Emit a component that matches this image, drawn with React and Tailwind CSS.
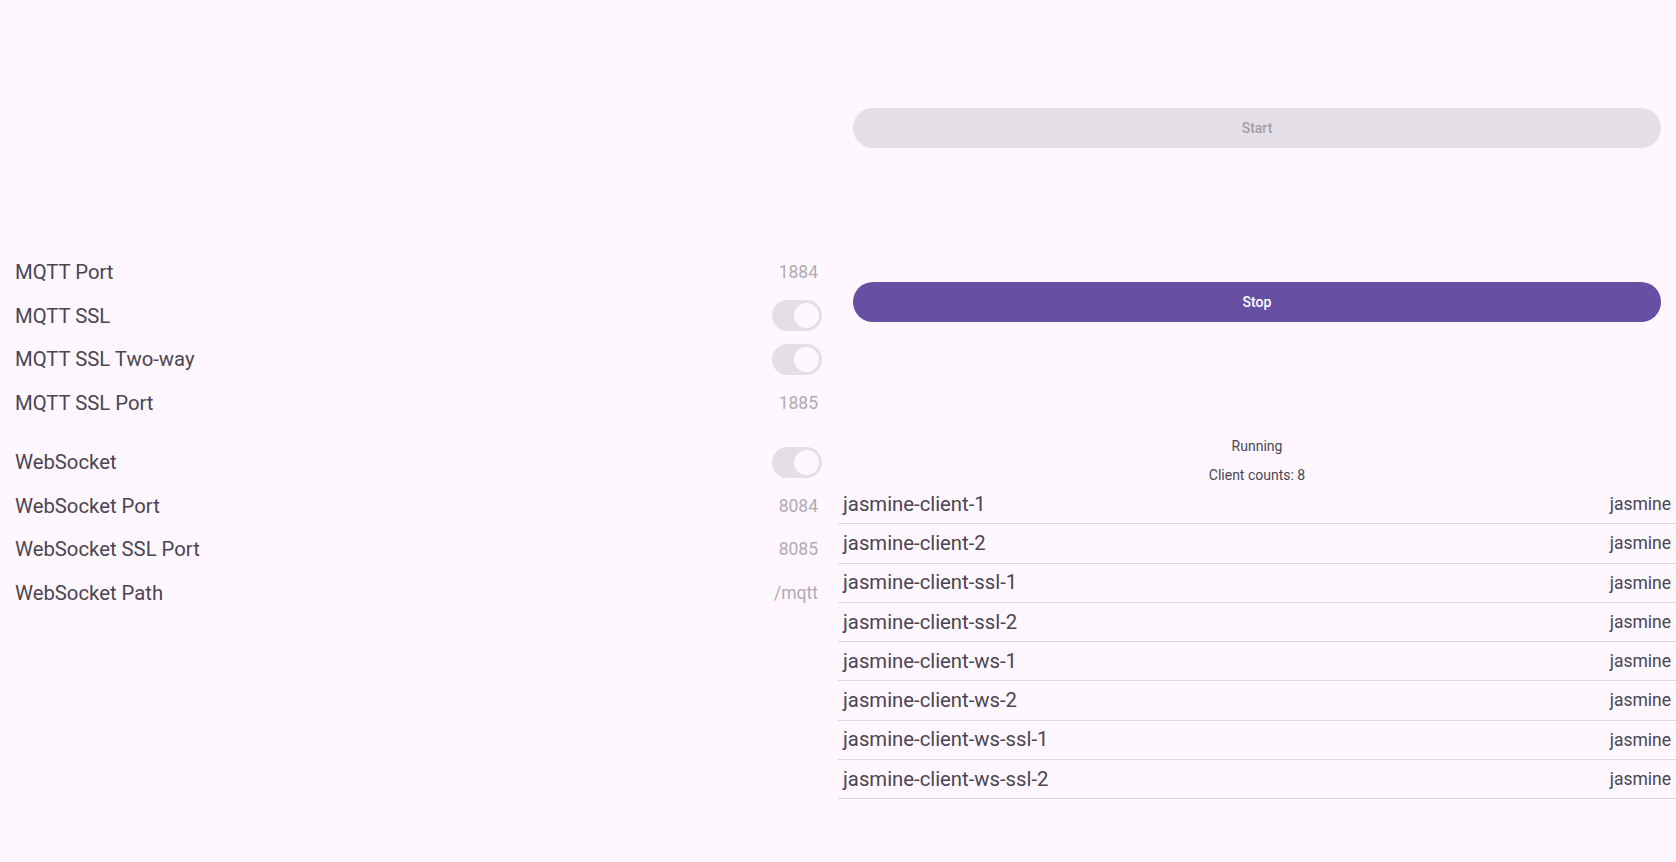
import React from 'react';

const settings = [
  { label: 'MQTT Port', value: '1884' },
  { label: 'MQTT SSL', toggle: true },
  { label: 'MQTT SSL Two-way', toggle: true },
  { label: 'MQTT SSL Port', value: '1885' },
];

const wsSettings = [
  { label: 'WebSocket', toggle: true },
  { label: 'WebSocket Port', value: '8084' },
  { label: 'WebSocket SSL Port', value: '8085' },
  { label: 'WebSocket Path', value: '/mqtt' },
];

const clients = [
  'jasmine-client-1',
  'jasmine-client-2',
  'jasmine-client-ssl-1',
  'jasmine-client-ssl-2',
  'jasmine-client-ws-1',
  'jasmine-client-ws-2',
  'jasmine-client-ws-ssl-1',
  'jasmine-client-ws-ssl-2',
];

const Toggle = () => (
  <div className="w-[50px] h-[31px] rounded-full bg-[#e4dfe6] flex items-center justify-end px-[3px]">
    <div className="w-[25px] h-[25px] rounded-full bg-[#fef7ff]" />
  </div>
);

const SettingRow = ({ item }) => (
  <div className="h-[43.5px] flex items-center justify-between">
    <span className="text-[20.3px] text-[#4a4550]">{item.label}</span>
    {item.toggle ? (
      <Toggle />
    ) : (
      <span className="text-[17.5px] text-[#b0abb4] mr-[4px]">{item.value}</span>
    )}
  </div>
);

const App = () => {
  return (
    <div className="w-full h-[862px] bg-[#fef7ff] flex font-['Roboto',sans-serif]">
      {/* settings */}
      <div className="w-[838px] flex flex-col justify-center pl-[15px] pr-[16px] pt-[3px]">
        {settings.map((item) => (
          <SettingRow key={item.label} item={item} />
        ))}
        <div className="mt-[16px]">
          {wsSettings.map((item) => (
            <SettingRow key={item.label} item={item} />
          ))}
        </div>
      </div>

      {/* server control + clients */}
      <div className="flex-1 flex flex-col pt-[108px]">
        <div className="mx-[15px]">
          <button className="w-full h-[40px] rounded-full bg-[#e4dfe6] text-[14px] font-medium text-[#a39ea7]">
            Start
          </button>
          <button className="w-full h-[40px] mt-[134px] rounded-full bg-[#6750a4] text-[14px] font-medium text-white">
            Stop
          </button>
        </div>
        <p className="mt-[114px] h-[20px] leading-[20px] text-center text-[14px] text-[#4a4550]">Running</p>
        <p className="mt-[9px] h-[20px] leading-[20px] text-center text-[14px] text-[#4a4550]">Client counts: 8</p>
        <div>
          {clients.map((c) => (
            <div
              key={c}
              className="h-[39.25px] flex items-center justify-between px-[5px] border-b border-[#dcd7de]"
            >
              <span className="text-[20.3px] text-[#4a4550]">{c}</span>
              <span className="text-[17.5px] text-[#4a4550]">jasmine</span>
            </div>
          ))}
        </div>
      </div>
    </div>
  );
};

export default App;
